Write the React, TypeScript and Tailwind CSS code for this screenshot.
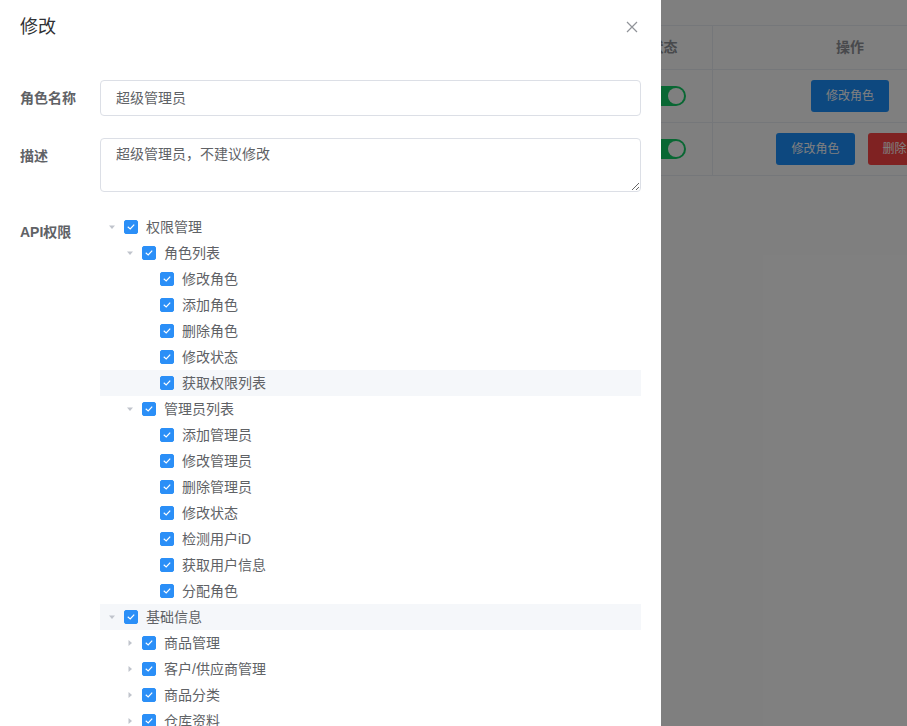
import React from "react";

type TreeNode = { label: string; level: 0 | 1 | 2; expand?: "open" | "closed"; hl?: boolean };

const nodes: TreeNode[] = [
  { label: "权限管理", level: 0, expand: "open" },
  { label: "角色列表", level: 1, expand: "open" },
  { label: "修改角色", level: 2 },
  { label: "添加角色", level: 2 },
  { label: "删除角色", level: 2 },
  { label: "修改状态", level: 2 },
  { label: "获取权限列表", level: 2, hl: true },
  { label: "管理员列表", level: 1, expand: "open" },
  { label: "添加管理员", level: 2 },
  { label: "修改管理员", level: 2 },
  { label: "删除管理员", level: 2 },
  { label: "修改状态", level: 2 },
  { label: "检测用户iD", level: 2 },
  { label: "获取用户信息", level: 2 },
  { label: "分配角色", level: 2 },
  { label: "基础信息", level: 0, expand: "open", hl: true },
  { label: "商品管理", level: 1, expand: "closed" },
  { label: "客户/供应商管理", level: 1, expand: "closed" },
  { label: "商品分类", level: 1, expand: "closed" },
  { label: "仓库资料", level: 1, expand: "closed" },
  { label: "仓库管理", level: 1, expand: "closed" },
];

const padClass = ["pl-0", "pl-[18px]", "pl-[36px]"];

function Caret({ expand }: { expand?: "open" | "closed" }) {
  return (
    <span className="w-[24px] h-[24px] flex items-center justify-center shrink-0">
      {expand === "open" && (
        <svg width="8" height="8" viewBox="0 0 8 8">
          <polygon points="1,2.5 7,2.5 4,6" fill="#c0c4cc" />
        </svg>
      )}
      {expand === "closed" && (
        <svg width="8" height="8" viewBox="0 0 8 8">
          <polygon points="2.5,1 6,4 2.5,7" fill="#c0c4cc" />
        </svg>
      )}
    </span>
  );
}

function Check() {
  return (
    <span className="w-[14px] h-[14px] rounded-[2px] bg-[#2b8ff7] border border-[#2b8ff7] flex items-center justify-center shrink-0">
      <svg width="10" height="10" viewBox="0 0 10 10">
        <polyline points="2.2,5.2 4.2,7 7.8,3" fill="none" stroke="#ffffff" strokeWidth="1.2" strokeLinecap="square" />
      </svg>
    </span>
  );
}

function Switch() {
  return (
    <span className="w-[40px] h-[20px] rounded-full bg-[#13ce66] flex items-center justify-end pr-[2px]">
      <span className="w-[16px] h-[16px] rounded-full bg-white" />
    </span>
  );
}

export default function App() {
  const font = "font-['Liberation_Sans','Noto_Sans_CJK_SC',sans-serif]";
  return (
    <div className={`relative w-full h-[726px] overflow-hidden bg-white ${font}`}>
      {/* background page */}
      <div className="pt-[25px] flex">
        <div className="ml-[615px] w-[372px] shrink-0 border-t border-[#ebeef5] text-[14px]">
          <div className="flex h-[44px] border-b border-[#ebeef5] text-[#909399] font-bold">
            <div className="w-[98px] flex items-center justify-center border-r border-[#ebeef5]">状态</div>
            <div className="flex-1 flex items-center justify-center">操作</div>
          </div>
          <div className="flex h-[53px] border-b border-[#ebeef5]">
            <div className="w-[98px] flex items-center justify-center pl-[5px] border-r border-[#ebeef5]">
              <Switch />
            </div>
            <div className="flex-1 flex items-center justify-center">
              <span className="h-[32px] px-[15px] rounded-[3px] bg-[#1a90ff] text-white text-[12px] flex items-center">修改角色</span>
            </div>
          </div>
          <div className="flex h-[53px] border-b border-[#ebeef5]">
            <div className="w-[98px] flex items-center justify-center pl-[5px] border-r border-[#ebeef5]">
              <Switch />
            </div>
            <div className="flex-1 flex items-center justify-center gap-[13px] pr-[2px]">
              <span className="h-[32px] px-[15px] rounded-[3px] bg-[#1a90ff] text-white text-[12px] flex items-center">修改角色</span>
              <span className="h-[32px] px-[15px] rounded-[3px] bg-[#ff4444] text-white text-[12px] flex items-center">删除</span>
            </div>
          </div>
        </div>
      </div>

      {/* overlay */}
      <div className="absolute inset-0 bg-black/50" />

      {/* drawer */}
      <div className="absolute left-0 top-0 bottom-0 w-[661px] bg-white overflow-hidden">
        <div className="flex items-center justify-between pl-[20px] pr-[23px] pt-[15px] h-[39px]">
          <span className="text-[18px] leading-[24px] text-[#303133]">修改</span>
          <svg width="12" height="12" viewBox="0 0 12 12">
            <path d="M1 1 L11 11 M11 1 L1 11" stroke="#909399" strokeWidth="1.2" />
          </svg>
        </div>
        <div className="mt-[41px] px-[20px] text-[14px]">
          <div className="flex mb-[22px]">
            <label className="w-[80px] shrink-0 leading-[36px] font-bold text-[#606266]">角色名称</label>
            <div className="flex-1 h-[36px] border border-[#dcdfe6] rounded-[4px] px-[15px] flex items-center text-[#606266]">
              超级管理员
            </div>
          </div>
          <div className="flex mb-[22px]">
            <label className="w-[80px] shrink-0 leading-[36px] font-bold text-[#606266]">描述</label>
            <textarea
              readOnly
              rows={2}
              value="超级管理员，不建议修改"
              className={`flex-1 h-[54px] border border-[#dcdfe6] rounded-[4px] px-[15px] py-[5px] leading-[1.5] text-[14px] text-[#606266] outline-none ${font}`}
            />
          </div>
          <div className="flex">
            <label className="w-[80px] shrink-0 leading-[36px] font-bold text-[#606266]">API权限</label>
            <div className="flex-1 flex flex-col">
              {nodes.map((n, i) => (
                <div
                  key={i}
                  className={`h-[26px] flex items-center ${padClass[n.level]} ${n.hl ? "bg-[#f5f7fa]" : ""}`}
                >
                  <Caret expand={n.expand} />
                  <Check />
                  <span className="ml-[8px] text-[#606266] whitespace-nowrap">{n.label}</span>
                </div>
              ))}
            </div>
          </div>
        </div>
      </div>
    </div>
  );
}
